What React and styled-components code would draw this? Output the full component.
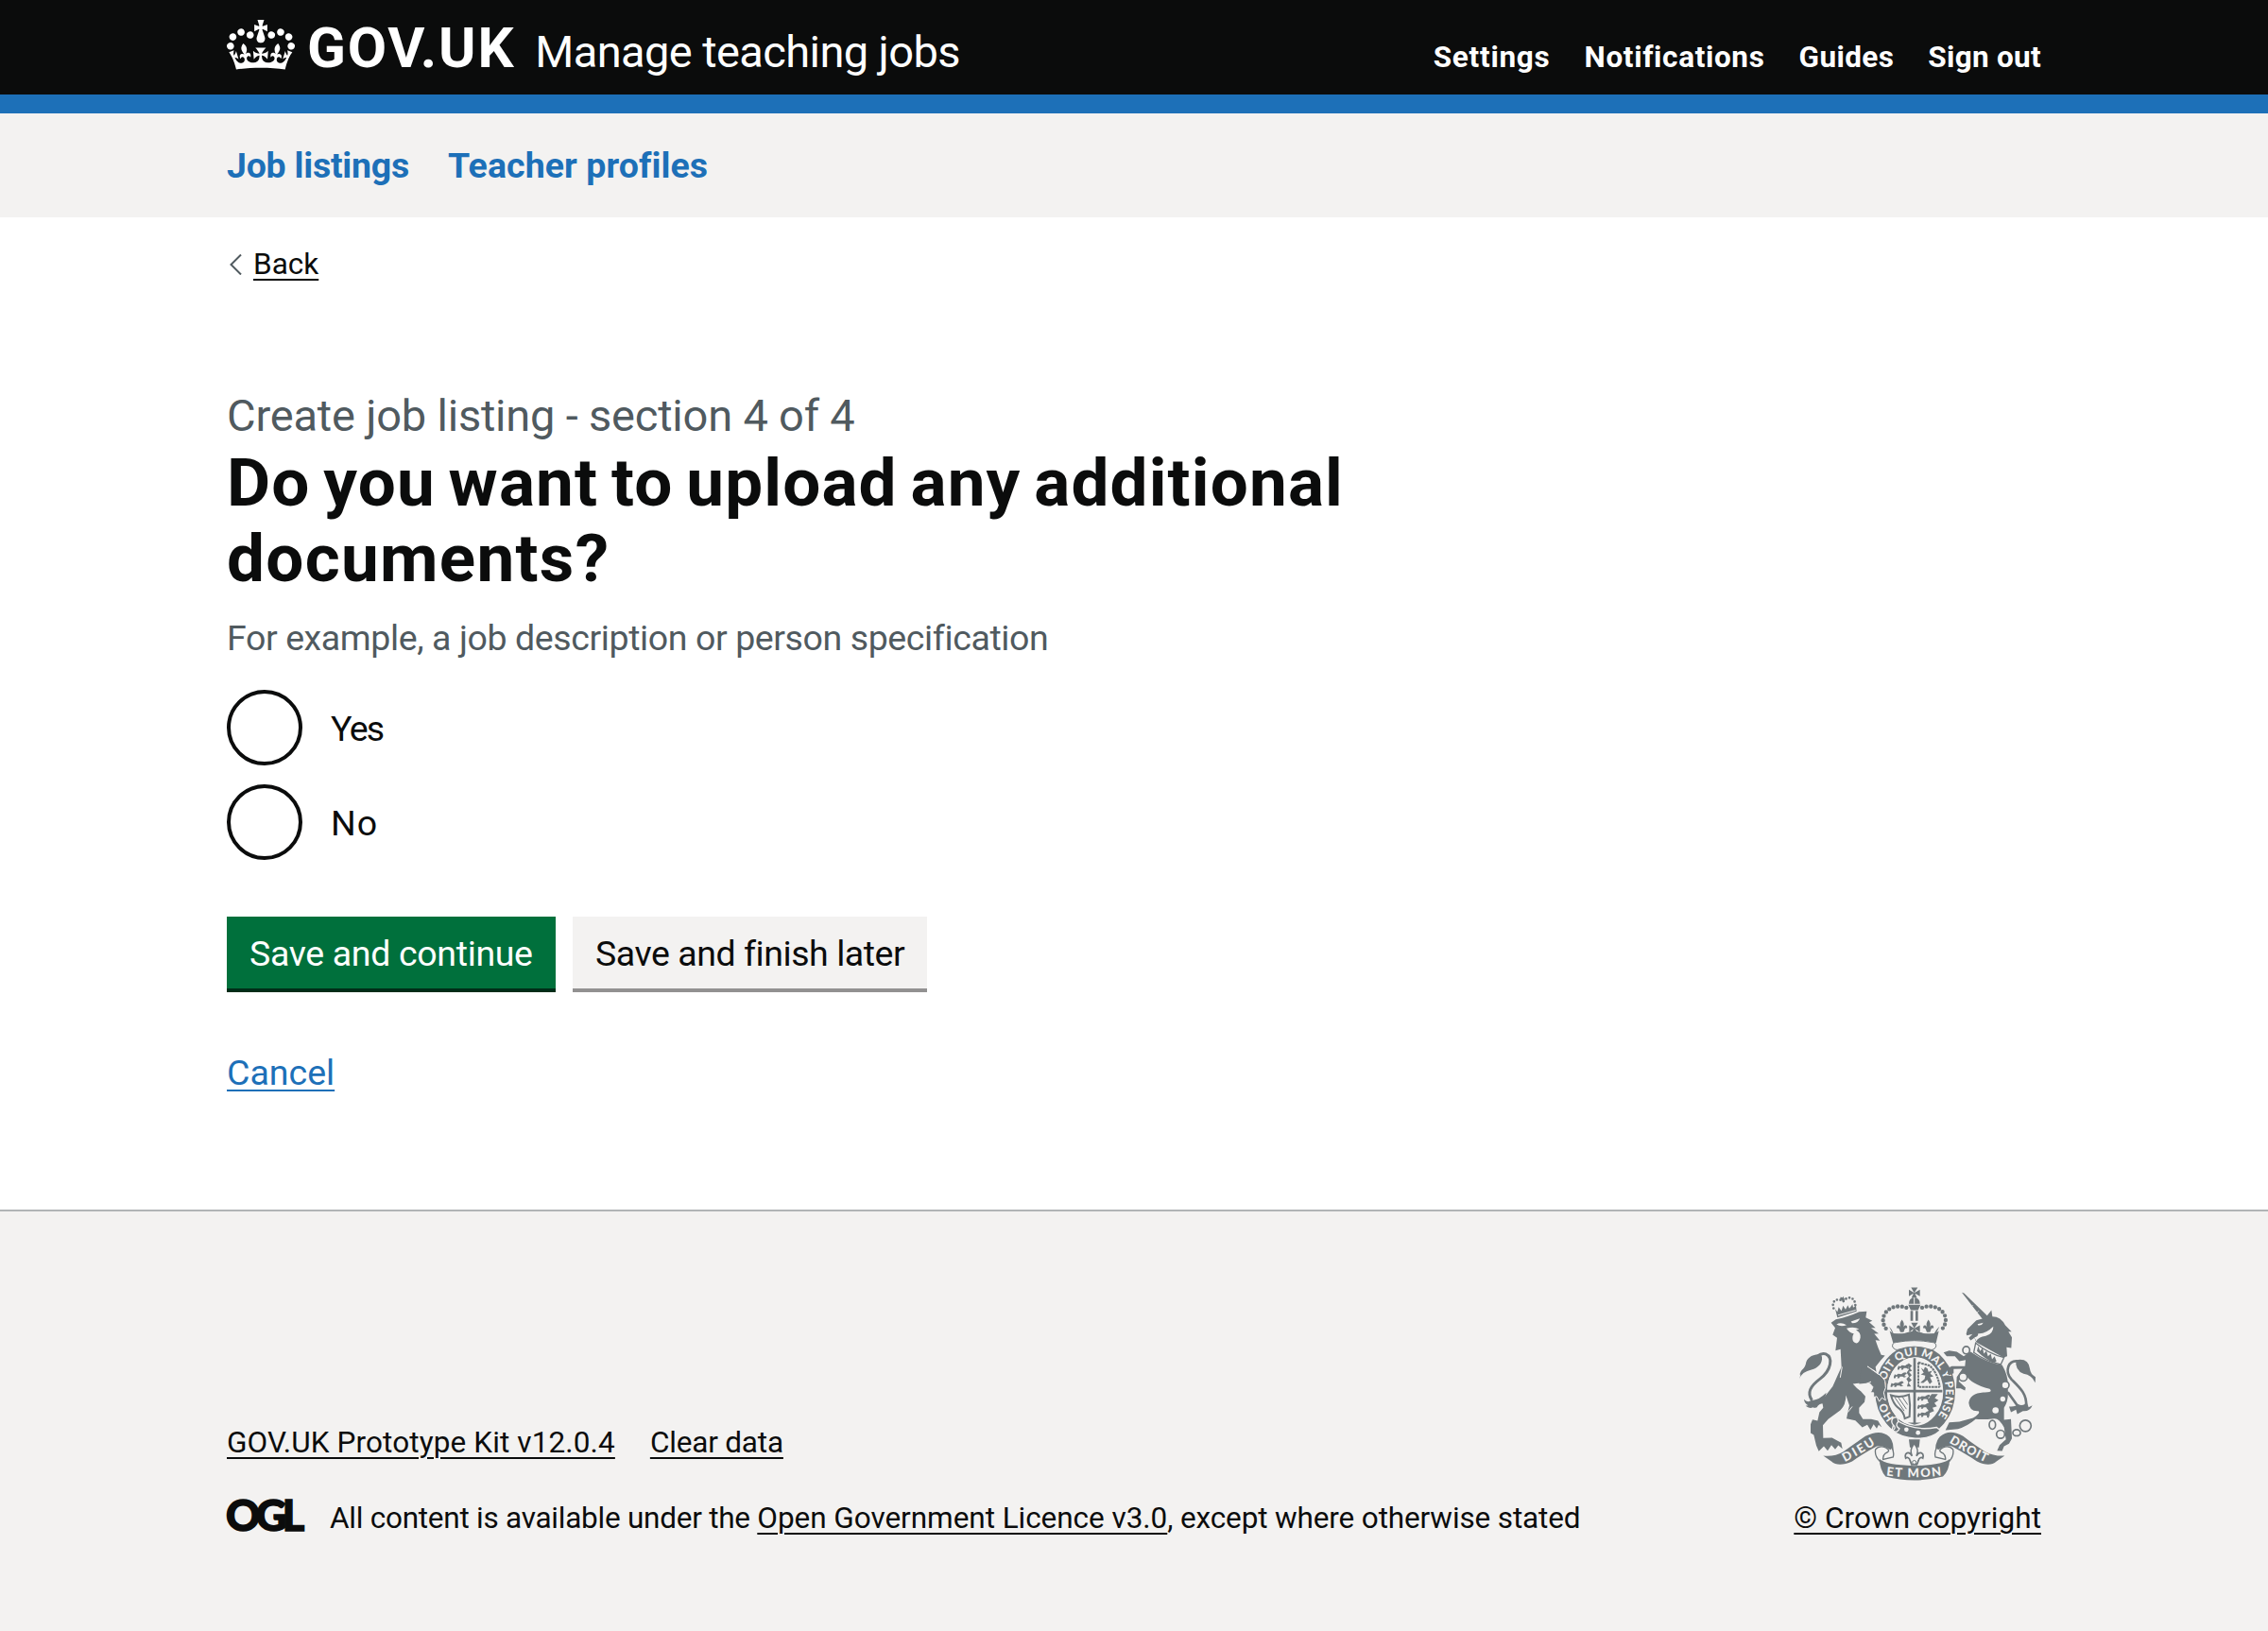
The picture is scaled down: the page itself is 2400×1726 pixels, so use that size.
import React from 'react';
import styled, { createGlobalStyle, css } from 'styled-components';

const ink = '#0b0c0c';
const blue = '#1d70b8';
const pale = '#f3f2f1';
const grey = '#505a5f';
const crest = '#6f777b';

const GlobalStyle = createGlobalStyle`
  *, *::before, *::after { box-sizing: border-box; }
  html, body { margin: 0; padding: 0; }
  body {
    background: #fff;
    color: ${ink};
    font-family: Roboto, "Liberation Sans", sans-serif;
    -webkit-font-smoothing: antialiased;
  }
`;

const Page = styled.div`
  display: flex;
  flex-direction: column;
  min-height: 1726px;
`;

const Container = styled.div`
  width: 1920px;
  margin: 0 auto;
`;

const tracking = css`
  letter-spacing: ${(p) => p.$track || 0}px;
`;

/* Header */
const Header = styled.header`
  height: 120px;
  background: ${ink};
  border-bottom: 20px solid ${blue};
  color: #fff;
`;

const HeaderRow = styled(Container)`
  display: flex;
  justify-content: space-between;
  align-items: baseline;
  padding-top: 21px;
`;

const Brand = styled.div`
  display: flex;
  align-items: baseline;
`;

const CrownIcon = styled.svg`
  align-self: flex-start;
  width: 72px;
  height: 53px;
  fill: #fff;
`;

const LogoText = styled.span`
  margin-left: 13px;
  font-size: 60px;
  line-height: 60px;
  font-weight: 700;
  letter-spacing: 1.8px;
`;

const ServiceName = styled.span`
  margin-left: 21px;
  font-size: 47px;
  line-height: 50px;
  letter-spacing: -0.6px;
`;

const HeaderNav = styled.nav`
  display: flex;
  gap: 36px;
`;

const HeaderLink = styled.a`
  color: #fff;
  font-size: 31.5px;
  line-height: 40px;
  font-weight: 700;
  ${tracking}
`;

/* Section navigation */
const SectionNav = styled.nav`
  height: 110px;
  background: ${pale};
`;

const SectionRow = styled(Container)`
  display: flex;
  gap: 41px;
  padding-top: 30px;
`;

const SectionLink = styled.a`
  color: ${blue};
  font-size: 37.5px;
  line-height: 50px;
  font-weight: 700;
  ${tracking}
`;

/* Main */
const Main = styled.main`
  width: 1920px;
  height: 1050px;
  margin: 0 auto;
  padding-top: 30px;
`;

const Link = styled.a`
  color: ${(p) => p.$color || ink};
  text-decoration: underline;
  text-decoration-thickness: 2px;
  text-underline-offset: 4.5px;
  ${tracking}
`;

const BackLink = styled.div`
  display: flex;
  align-items: center;
  gap: 12px;
  height: 40px;
  padding-left: 3px;
  font-size: 31.5px;
  line-height: 42px;
`;

const Chevron = styled.svg`
  width: 13px;
  height: 22px;
  fill: none;
  stroke: ${grey};
  stroke-width: 2;
`;

const Form = styled.form`
  width: 1260px;
  padding-top: 110px;
`;

const Caption = styled.div`
  color: ${grey};
  font-size: 47px;
  line-height: 60px;
  letter-spacing: -0.2px;
`;

const Heading = styled.h1`
  margin: 1px 0 19px;
  font-size: 71px;
  line-height: 80px;
  font-weight: 700;
`;

const HeadingLine = styled.span`
  display: block;
  white-space: nowrap;
  word-spacing: -5px;
  ${tracking}
`;

const Hint = styled.p`
  margin: 0 0 30px;
  color: ${grey};
  font-size: 37.5px;
  line-height: 50px;
  letter-spacing: -0.4px;
`;

const Radios = styled.div`
  display: flex;
  flex-direction: column;
  gap: 20px;
  margin-bottom: 60px;
`;

const RadioItem = styled.label`
  display: flex;
  align-items: center;
  gap: 30px;
  height: 80px;
`;

const RadioRing = styled.span`
  width: 80px;
  height: 80px;
  border: 4px solid ${ink};
  border-radius: 50%;
`;

const RadioLabel = styled.span`
  padding-top: 2px;
  font-size: 37.5px;
  line-height: 50px;
  ${tracking}
`;

const ButtonRow = styled.div`
  display: flex;
  gap: 18px;
  margin-bottom: 60px;
`;

const Button = styled.button`
  width: ${(p) => p.$width}px;
  height: 80px;
  padding: 2px 0 0 24px;
  border: 0;
  border-bottom: 4px solid ${(p) => (p.$secondary ? '#929191' : '#002d18')};
  background: ${(p) => (p.$secondary ? pale : '#00703c')};
  color: ${(p) => (p.$secondary ? ink : '#fff')};
  font-family: inherit;
  font-size: 37.5px;
  line-height: 50px;
  text-align: left;
  white-space: nowrap;
  ${tracking}
`;

const CancelLine = styled.p`
  margin: 0;
  font-size: 37.5px;
  line-height: 50px;
`;

/* Footer */
const Footer = styled.footer`
  flex: 1;
  border-top: 2px solid #b1b4b6;
  background: ${pale};
  font-size: 31.5px;
  line-height: 42px;
`;

const FooterRow = styled(Container)`
  display: flex;
  justify-content: space-between;
  align-items: flex-end;
  padding-top: 80px;
`;

const FooterLinks = styled.div`
  display: flex;
  gap: 37px;
  margin-bottom: 38px;
`;

const Licence = styled.div`
  display: flex;
  align-items: flex-start;
  white-space: pre;
`;

const OglMark = styled.span`
  width: 109px;
  margin-left: -1px;
  margin-right: 1px;
  font-family: Lato, sans-serif;
  font-size: 45px;
  line-height: 34px;
  font-weight: 900;
  letter-spacing: -4.7px;
  -webkit-text-stroke: 1.5px ${ink};
`;

const Part = styled.span`
  ${tracking}
`;

const Copyright = styled.div`
  display: flex;
  flex-direction: column;
  align-items: flex-end;
  gap: 19px;
`;

const Arms = styled.svg`
  width: 250px;
  height: 205px;
  margin-right: 6px;
  overflow: visible;
`;

const Crown = () => (
  <CrownIcon viewBox="0 0 132 97" aria-hidden="true">
    <path fillRule="evenodd" d="M25 30.2c3.5 1.5 7.7-.2 9.1-3.7 1.5-3.6-.2-7.8-3.9-9.2-3.6-1.4-7.6.3-9.1 3.9-1.4 3.5.3 7.5 3.9 9zM9 39.5c3.6 1.5 7.8-.2 9.2-3.7 1.5-3.6-.2-7.8-3.9-9.1-3.6-1.5-7.6.2-9.1 3.8-1.4 3.5.3 7.5 3.8 9zM4.4 57.2c3.5 1.5 7.7-.2 9.1-3.8 1.5-3.6-.2-7.7-3.9-9.1-3.5-1.5-7.6.3-9.1 3.8-1.4 3.5.3 7.6 3.9 9.1zm38.3-21.4c3.5 1.5 7.7-.2 9.1-3.8 1.5-3.6-.2-7.7-3.9-9.1-3.6-1.5-7.6.3-9.1 3.8-1.3 3.6.4 7.7 3.9 9.1zm64.4-5.6c-3.6 1.5-7.8-.2-9.1-3.7-1.5-3.6.2-7.8 3.8-9.2 3.6-1.4 7.7.3 9.2 3.9 1.3 3.5-.4 7.5-3.9 9zm15.9 9.3c-3.6 1.5-7.7-.2-9.1-3.7-1.5-3.6.2-7.8 3.7-9.1 3.6-1.5 7.7.2 9.2 3.8 1.5 3.5-.3 7.5-3.8 9zm4.7 17.7c-3.6 1.5-7.8-.2-9.2-3.8-1.5-3.6.2-7.7 3.9-9.1 3.6-1.5 7.7.3 9.2 3.8 1.3 3.5-.4 7.6-3.9 9.1zM89.3 35.8c-3.6 1.5-7.8-.2-9.2-3.8-1.4-3.6.2-7.7 3.9-9.1 3.6-1.5 7.7.3 9.2 3.8 1.4 3.6-.3 7.7-3.9 9.1zM69.7 17.7l8.9 4.7V9.3l-8.9 2.8c-.2-.3-.5-.6-.9-.9L72.4 0H59.6l3.5 11.2c-.3.3-.6.5-.9.9l-8.8-2.8v13.1l8.8-4.7c.3.3.6.7.9.9l-5 15.4v.1c-.2.8-.4 1.6-.4 2.4 0 4.1 3.1 7.5 7 8.1h.2c.3 0 .7.1 1 .1.4 0 .7 0 1-.1h.2c4-.6 7.1-4.1 7.1-8.1 0-.8-.1-1.7-.4-2.4V34l-5.1-15.4c.4-.2.7-.6 1-.9zM66 92.8c16.9 0 32.8 1.1 47.1 3.2 4-16.9 8.9-26.7 14-33.5l-9.6-3.4c1 4.9 1.1 7.2 0 10.2-1.5-1.4-3-4.3-4.2-8.7L108.6 76c2.8-2 5-3.2 7.5-3.3-4.4 9.4-10 11.9-13.6 11.2-4.3-.8-6.3-4.6-5.6-7.9 1-4.7 5.7-5.9 8-.5 4.3-8.7-3-11.4-7.6-8.8 7.1-7.2 7.9-13.5 2.1-21.1-8 6.1-8.1 12.3-4.5 20.8-4.7-5.4-12.1-2.5-9.5 6.2 3.4-5.2 7.9-2 7.2 3.1-.6 4.3-6.4 7.8-13.5 7.2-10.3-.9-10.9-8-11.2-13.8 2.5-.5 7.1 1.8 11 7.3L80.2 60c-4.1 4.4-8 5.3-12.3 5.4 1.4-4.4 8-11.6 8-11.6H55.5s6.4 7.2 7.9 11.6c-4.2-.1-8-1-12.3-5.4l1.4 16.4c3.9-5.5 8.5-7.7 10.9-7.3-.3 5.8-.9 12.8-11.1 13.8-7.2.6-12.9-2.9-13.5-7.2-.7-5 3.8-8.3 7.1-3.1 2.7-8.7-4.6-11.6-9.4-6.2 3.7-8.5 3.6-14.7-4.6-20.8-5.8 7.6-5 13.9 2.2 21.1-4.7-2.6-11.9.1-7.7 8.8 2.3-5.5 7.1-4.2 8.1.5.7 3.3-1.3 7.1-5.7 7.9-3.5.7-9-1.8-13.5-11.2 2.5.1 4.7 1.3 7.5 3.3l-4.7-15.4c-1.2 4.4-2.7 7.2-4.3 8.7-1.1-3-.9-5.3 0-10.2l-9.5 3.4c5 6.9 9.9 16.7 14 33.5 14.8-2.1 30.8-3.2 47.7-3.2z" />
  </CrownIcon>
);

const PassantLion = ({ x, y }) => (
  <path
    transform={`translate(${x} ${y})`}
    d="M0 14 L3 6 L8 9 L14 5 L24 6 L30 2 L37 0 L42 5 L36 8 L34 12 L41 14 L33 17 L28 14 L20 14 L17 19 L11 19 L13 14 L7 14 L5 19 L0 19Z"
  />
);

const Fleur = ({ x, y, s = 1 }) => (
  <path
    transform={`translate(${x} ${y}) scale(${s})`}
    d="M0 -20 C7 -10 8 -4 4 4 C10 -6 19 -2 16 8 C13 6 9 7 8 12 L5 20 H-5 L-8 12 C-9 7 -13 6 -16 8 C-19 -2 -10 -6 -4 4 C-8 -4 -7 -10 0 -20Z"
  />
);

const RoyalArms = () => (
  <Arms viewBox="72 65 750 614" fill={crest} stroke="none" aria-label="Royal coat of arms">
    <defs>
      <path id="garter" d="M376 483 A97 115 0 1 1 504 483" />
      <path id="dieu" d="M217 620 Q272 592 322 558" />
      <path id="mon" d="M348 663 Q437 674 526 662" />
      <path id="droit" d="M547 558 Q606 594 668 623" />
    </defs>

    {/* Imperial crown */}
    <path d="M437 83 L427 66 H448Z M437 83 L420 73 V94Z M437 83 L455 73 V94Z M437 80 L446 99 H428Z" />
    <path d="M420 118 Q420 98 437 98 Q455 98 455 118Z M418 121 H457 L449 138 H426Z M425 140 h8 v32 h-8z M441 140 h8 v32 h-8z" />
    <path d="M437 98 V118" stroke={pale} strokeWidth="3" />
    <path d="M412 130 C385 120 352 128 341 155 C334 172 340 188 350 200 M462 130 C490 120 522 128 534 155 C541 172 534 188 524 200" fill="none" stroke={crest} strokeWidth="13" strokeLinecap="round" strokeDasharray="0 14" />
    <path d="M357 190 L370 215 H505 L517 190 Q508 198 500 212 L371 212 Q366 198 357 190Z" />
    <Fleur x={398} y={188} />
    <Fleur x={482} y={188} />
    <path d="M437 196 L427 178 H449Z M437 196 L421 186 V208Z M437 196 L455 186 V208Z M425 214 L437 194 L451 214Z" />
    <path d="M359 204 Q380 222 410 210 Q437 200 462 210 Q492 222 515 204 L506 242 Q437 226 370 242Z" />

    {/* Garter */}
    <ellipse cx="440" cy="396" rx="134" ry="154" fill={pale} />
    <ellipse cx="440" cy="396" rx="108" ry="128" fill="none" stroke={crest} strokeWidth="38" />
    <path d="M368 254 Q366 241 380 240 Q437 229 494 240 Q508 241 506 254 Q498 268 484 262 Q437 246 390 262 Q376 268 368 254Z" fill={pale} stroke={crest} strokeWidth="3" />
    <text fill={pale} fontFamily="Lato, sans-serif" fontWeight="900" fontSize="35" xmlSpace="preserve">
      <textPath href="#garter" startOffset="4" textLength="505">{'HO\u00a0\u00a0\u00a0\u00a0\u00a0SOIT QUI MAL Y PENSE'}</textPath>
    </text>
    <ellipse cx="438" cy="395" rx="87" ry="107" fill={pale} />

    {/* Quartered shield */}
    <path d="M434 290 h8 v101 h84 v8 H442 v96 h18 L438 502 L416 495 h18 V399 H350 v-8 h84z" />
    <path d="M450 304 V382 H518 M450 304 L486 314 Q512 338 518 382" fill="none" stroke={crest} strokeWidth="6" strokeDasharray="8 2" />
    <PassantLion x={384} y={308} />
    <PassantLion x={372} y={335} />
    <PassantLion x={362} y={363} />
    <path d="M418 306 l12 8 -7 8 7 9 -10 3 9 10 -8 8 8 8 -10 8 8 12 h-13 l4 -14 -6 -10 8 -8 -7 -12 7 -10z" />
    <PassantLion x={447} y={406} />
    <PassantLion x={447} y={432} />
    <PassantLion x={447} y={458} />
    <path d="M492 404 h20 l-10 13 12 7 -13 9 8 10 -14 5 5 10 -14 6 -3 16 -6 -2 5 -22 -7 -8 10 -12 -6 -11z" />
    <path d="M458 320 l9 8 4 -10 8 5 3 11 12 -4 -6 10 10 8 -11 3 7 14 -8 8 -8 -14 -12 10 -10 -1 14 -12 2 -10 -14 -4 9 -5z" />
    <path d="M363 408 Q390 418 420 406 Q426 440 422 476 L407 482 Q404 460 384 446 Q370 434 363 408Z" fill="none" stroke={crest} strokeWidth="6" />
    <path d="M376 416 L405 458 M387 416 L412 452 M399 413 L416 438" stroke={crest} strokeWidth="3" fill="none" />

    {/* Belt */}
    <path d="M376 484 Q430 524 508 510 L520 520 Q490 548 440 545 Q394 542 366 520Z" stroke={pale} strokeWidth="4" />
    <path d="M368 482 q18 -12 18 10 q-12 12 4 22 q-6 16 -22 6 q14 -8 2 -18 q-8 -8 -2 -20z" fill={crest} stroke={pale} strokeWidth="4" />
    <circle cx="412" cy="517" r="7" fill={pale} />
    <circle cx="449" cy="527" r="7" fill={pale} />

    {/* Lion's crown */}
    <path d="M181 132 C172 106 196 98 212 110 C222 94 248 92 250 122" fill="none" stroke={crest} strokeWidth="8" strokeLinecap="round" strokeDasharray="0 11" />
    <path d="M186 134 L193 143 L197 128 L206 140 L211 124 L219 136 L226 122 L231 133 L241 119 L243 130 L252 123 L254 142 L193 161Z" />
    <path d="M203 96 l6 2 3 -4 2 7 5 2 -5 3 -2 9 -5 -9 -6 -1z" />
    <path d="M195 154 L251 138" stroke={pale} strokeWidth="3" fill="none" />

    {/* Lion */}
    <path d="M188 167 Q230 158 262 143 L286 142 L283 161 L304 172 L294 176 L314 194 L300 194 L324 212 L310 213 L328 235 L314 233 Q322 258 332 280 L344 282 L330 298 L314 318 L318 342 L330 356 L298 365 L242 372 Q252 384 268 396 L282 412 L279 430 L262 448 L262 464 L274 484 L300 484 L322 489 L334 510 L324 502 L318 514 L308 500 L298 518 L288 502 L272 510 L250 488 L222 482 L226 462 L231 440 L220 408 Q220 440 202 456 L164 484 L147 503 L148 544 L176 543 L205 559 L209 578 L196 567 L186 580 L174 566 L162 584 L150 570 L134 586 L126 568 L118 534 L108 528 L108 500 L114 485 L130 489 L136 462 L148 448 L144 424 L178 380 L196 340 L206 318 L203 262 L187 266 L192 226 L178 216 L186 194 L173 178Z" />
    <path d="M290 318 Q330 340 344 362 L346 384 L340 400 L346 424 L334 416 L326 428 L318 412 L308 414 L308 400 L298 400 L306 382 L288 362Z" stroke={pale} strokeWidth="3" />
    <path d="M270 320 L296 318 L310 336 L300 368 L262 372Z" />
    <path d="M190 183 q14 -9 32 2 q-18 7 -32 -2z M236 174 l28 -10 q-4 15 -24 15z M222 196 q22 -8 40 2 l-10 3 q16 8 14 24 q-3 17 -13 18 q-12 -3 -12 -15 q0 -10 4 -16 q-12 0 -23 -16z" fill={pale} />
    <path d="M208 318 l-6 34 M300 365 l-18 8 M286 374 l-12 8 M226 462 l14 -18 M288 316 L324 342" stroke={pale} strokeWidth="3" fill="none" />
    <path d="M112 424 C96 400 106 380 138 356 C174 328 180 288 156 277 C146 274 138 277 130 283" fill="none" stroke={crest} strokeWidth="9" />
    <path d="M72 356 C78 342 76 336 72 347 C78 320 90 328 94 302 C102 282 124 276 142 280 C150 300 136 318 118 325 C98 331 82 334 72 356Z" />
    <path d="M87 421 Q98 434 112 423 Q130 427 158 400 L148 434 Q134 434 128 446 Q118 450 116 446 Q104 452 92 442 L100 440 Q88 434 87 421Z" />

    {/* Unicorn */}
    <path d="M588 82 L595 84 L673 160 L655 168Z" />
    <path d="M606 104 l-8 6 M624 122 l-8 8 M642 140 l-8 8" stroke={pale} strokeWidth="2" />
    <path d="M602 213 L606 198 L634 170 L656 164 L666 158 L682 138 L685 158 Q712 158 726 186 L746 206 L736 206 L747 224 L745 258 L730 256 L732 284 L720 288 L634 240 L628 226 L616 234 L610 226 L622 214 L604 218Z" />
    <path d="M638 182 l18 -4 q-4 10 -16 8z M640 212 Q664 214 688 190 Q688 214 664 220 Q640 224 634 236 L628 224 Q640 222 640 212z" fill={pale} />
    <path d="M626 272 L632 242 Q672 276 722 288 L712 310 Q664 300 626 272Z" fill={pale} stroke={crest} strokeWidth="4" />
    <path d="M636 268 l4 -16 6 16 8 -10 4 18 8 -9 5 17 9 -8 4 18 8 -10 6 16 -8 6 Q660 292 636 268z" />
    <path d="M616 270 Q664 304 716 312 Q738 350 734 386 Q738 424 722 448 L722 486 L744 484 L747 545 L738 562 L722 570 L716 585 L700 584 L708 566 L728 548 L722 510 Q706 480 690 482 Q660 486 632 484 Q604 508 576 515 L536 519 L548 494 L580 492 L624 480 Q650 464 640 458 Q612 460 610 432 Q614 402 656 399 Q690 400 676 388 Q616 372 602 344 L584 352 L578 364 L600 384 L598 393 L584 386 L570 386 L572 350 L590 324 L562 325 L562 338 L546 345 L540 324 L556 316 L598 316 L600 296 L580 300 L566 284 L540 284 L530 272 L548 266 L572 270 L594 284Z" />
    <circle cx="718" cy="420" r="8" fill={pale} />
    <circle cx="695" cy="456" r="10" fill={pale} />
    <path d="M766 300 C736 296 722 330 746 358 C770 382 796 404 792 442 M734 398 L764 440" fill="none" stroke={crest} strokeWidth="8" />
    <path d="M760 296 Q800 288 804 324 Q806 342 822 350 L821 368 Q810 344 784 340 Q756 328 760 296Z" />
    <path d="M738 444 Q760 446 766 436 Q784 446 794 428 L800 446 L812 440 Q804 460 782 458 L764 468 L760 454 L744 462Z" />

    {/* Chain */}
    <g fill="none" stroke={crest} strokeWidth="5">
      <ellipse cx="602" cy="265" rx="11" ry="12" />
      <circle cx="592" cy="350" r="13" fill={pale} />
      <circle cx="726" cy="376" r="12" fill={pale} />
      <ellipse cx="685" cy="502" rx="10" ry="14" />
      <circle cx="711" cy="532" r="13" />
      <ellipse cx="762" cy="527" rx="12" ry="10" />
      <circle cx="790" cy="505" r="18" />
    </g>

    {/* Ribbon */}
    <path d="M148 600 Q184 604 212 587 Q250 560 282 538 Q330 514 358 540 Q374 558 370 590 Q348 566 318 570 Q270 596 240 618 Q196 638 174 618Z" />
    <path d="M724 600 Q690 602 662 587 Q620 560 592 538 Q548 512 518 540 Q502 558 504 590 Q526 566 556 570 Q604 596 636 618 Q676 638 698 618Z" />
    <path d="M328 618 Q310 600 314 580 Q326 566 346 574 Q366 584 346 592 Q336 600 338 612 L370 604 Q374 588 366 576 M548 618 Q564 600 560 580 Q548 566 528 574 Q508 584 528 592 Q538 600 536 612 L504 604 Q500 588 508 576" fill={pale} stroke={crest} strokeWidth="4" />
    <path d="M326 610 Q346 630 437 632 Q528 630 550 610 Q548 648 528 666 Q480 678 437 678 Q392 678 346 666 Q328 646 326 610Z" />
    <g fill={pale} fontFamily="Lato, sans-serif" fontWeight="900" fontSize="39">
      <text><textPath href="#dieu" textLength="112">DIEU</textPath></text>
      <text><textPath href="#mon" textLength="176">ET MON</textPath></text>
      <text><textPath href="#droit" textLength="132">DROIT</textPath></text>
    </g>

    {/* Fleur-de-lis badge */}
    <path d="M420 548 H455 L452 574 H423Z" />
    <g fill={pale} stroke={crest} strokeWidth="3"><Fleur x={437} y={594} s={1.7} /></g>
    <circle cx="437" cy="621" r="6" fill={pale} stroke={crest} strokeWidth="3" />
  </Arms>
);

const navItems = [
  ['Settings', 0.75],
  ['Notifications', 0.65],
  ['Guides', 0.4],
  ['Sign out', 0.3],
];

export default function App() {
  return (
    <Page>
      <GlobalStyle />
      <Header>
        <HeaderRow>
          <Brand>
            <Crown />
            <LogoText>GOV.UK</LogoText>
            <ServiceName>Manage teaching jobs</ServiceName>
          </Brand>
          <HeaderNav>
            {navItems.map(([label, track]) => (
              <HeaderLink key={label} $track={track}>{label}</HeaderLink>
            ))}
          </HeaderNav>
        </HeaderRow>
      </Header>

      <SectionNav>
        <SectionRow>
          <SectionLink $track={-0.25}>Job listings</SectionLink>
          <SectionLink $track={0.08}>Teacher profiles</SectionLink>
        </SectionRow>
      </SectionNav>

      <Main>
        <BackLink>
          <Chevron viewBox="0 0 13 22"><path d="M12 0.5 L1.5 11 L12 21.5" /></Chevron>
          <Link>Back</Link>
        </BackLink>
        <Form>
          <Caption>Create job listing - section 4 of 4</Caption>
          <Heading>
            <HeadingLine $track={1.15}>Do you want to upload any additional</HeadingLine>
            <HeadingLine $track={1.3}>documents?</HeadingLine>
          </Heading>
          <Hint>For example, a job description or person specification</Hint>
          <Radios>
            <RadioItem><RadioRing /><RadioLabel $track={-1.7}>Yes</RadioLabel></RadioItem>
            <RadioItem><RadioRing /><RadioLabel $track={1}>No</RadioLabel></RadioItem>
          </Radios>
          <ButtonRow>
            <Button type="button" $width={348} $track={-0.34}>Save and continue</Button>
            <Button type="button" $secondary $width={375} $track={-0.45}>Save and finish later</Button>
          </ButtonRow>
          <CancelLine><Link $color={blue}>Cancel</Link></CancelLine>
        </Form>
      </Main>

      <Footer>
        <FooterRow>
          <div>
            <FooterLinks>
              <Link $track={0.12}>GOV.UK Prototype Kit v12.0.4</Link>
              <Link $track={-0.18}>Clear data</Link>
            </FooterLinks>
            <Licence>
              <OglMark>OGL</OglMark>
              <Part $track={-0.25}>{'All content is available under the '}</Part>
              <Link $track={-0.05}>Open Government Licence v3.0</Link>
              <Part $track={-0.14}>, except where otherwise stated</Part>
            </Licence>
          </div>
          <Copyright>
            <RoyalArms />
            <Link $track={0.05}>© Crown copyright</Link>
          </Copyright>
        </FooterRow>
      </Footer>
    </Page>
  );
}
